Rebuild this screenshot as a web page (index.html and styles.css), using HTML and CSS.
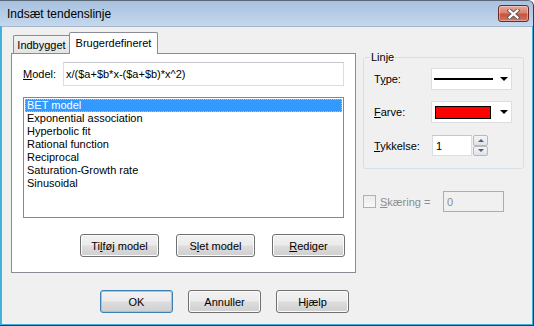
FILE: index.html
```html
<!DOCTYPE html>
<html lang="da">
<head>
    <meta charset="UTF-8">
    <title>Indsæt tendenslinje</title>
    <link rel="stylesheet" href="styles.css">
</head>
<body>
<div class="window">
    <div class="titlebar">
        <span class="title">Indsæt tendenslinje</span>
        <button class="close" title="Luk">
            <svg width="13" height="10" viewBox="0 0 13 10">
                <path d="M2.5 1.5 L10.5 8.5 M10.5 1.5 L2.5 8.5" stroke="#5a5a5a" stroke-width="4" stroke-linecap="square"/>
                <path d="M2.5 1.5 L10.5 8.5 M10.5 1.5 L2.5 8.5" stroke="#fff" stroke-width="2.2" stroke-linecap="square"/>
            </svg>
        </button>
    </div>

    <div class="client">
        <div class="main">
            <div class="tabs">
                <div class="tabstrip">
                    <div class="tab">Indbygget</div>
                    <div class="tab active">Brugerdefineret</div>
                </div>
                <div class="panel">
                    <div class="model-row">
                        <label for="model"><u>M</u>odel:</label>
                        <input type="text" id="model" value="x/($a+$b*x-($a+$b)*x^2)">
                    </div>
                    <ul class="list">
                        <li class="selected">BET model</li>
                        <li>Exponential association</li>
                        <li>Hyperbolic fit</li>
                        <li>Rational function</li>
                        <li>Reciprocal</li>
                        <li>Saturation-Growth rate</li>
                        <li>Sinusoidal</li>
                    </ul>
                    <div class="panel-buttons">
                        <button class="btn wide">Ti<u>l</u>føj model</button>
                        <button class="btn wide">S<u>l</u>et model</button>
                        <button class="btn"><u>R</u>ediger</button>
                    </div>
                </div>
            </div>

            <div class="side">
                <fieldset class="group">
                    <legend>Linje</legend>
                    <div class="frow first">
                        <label>T<u>y</u>pe:</label>
                        <div class="combo">
                            <span class="line-sample"></span>
                            <span class="arrow"></span>
                        </div>
                    </div>
                    <div class="frow">
                        <label><u>F</u>arve:</label>
                        <div class="combo">
                            <span class="swatch"></span>
                            <span class="arrow"></span>
                        </div>
                    </div>
                    <div class="frow spin-row">
                        <label><u>T</u>ykkelse:</label>
                        <input type="text" class="num" value="1">
                        <div class="spinner">
                            <span class="spin up"><i></i></span>
                            <span class="spin down"><i></i></span>
                        </div>
                    </div>
                </fieldset>

                <div class="intercept">
                    <span class="check"></span>
                    <label class="disabled"><u>S</u>kæring =</label>
                    <input type="text" class="off" value="0" disabled>
                </div>
            </div>
        </div>

        <div class="footer">
            <button class="btn default">OK</button>
            <button class="btn">Annuller</button>
            <button class="btn">Hjælp</button>
        </div>
    </div>
</div>
</body>
</html>
```

FILE: styles.css
```css
html, body { margin: 0; }
body { font-family: "Liberation Sans", Arial, sans-serif; font-size: 11px; color: #000; background: #fff; }

/* window frame */
.window { width: 534px; height: 326px; box-sizing: border-box; display: flex; flex-direction: column; background: #3fb0dd; border: 1px solid #2f3b46; border-left: none; border-top-color: #5a6877; border-top-right-radius: 6px; overflow: hidden; }
.titlebar { height: 25px; flex: none; display: flex; align-items: center; justify-content: space-between; padding: 0 4px 0 7px; background: linear-gradient(#a8c1de, #c4d8ee); }
.title { font-size: 12px; color: #000; }
.close { width: 31px; height: 17px; padding: 0; display: flex; align-items: center; justify-content: center; border: 1px solid #6b2a24; border-radius: 3px; background: linear-gradient(#e7a797 0%, #d98470 45%, #c8533c 55%, #d27562 100%); box-shadow: inset 0 0 0 1px rgba(255,255,255,0.35); }

.client { flex: 1; margin: 0 1px 1px 1px; background: #f0f0f0; border-left: 1px solid #8d9cab; border-top: 1px solid #a7b7c9; display: flex; flex-direction: column; }
.main { display: flex; padding-top: 5px; }

/* tab control */
.tabs { margin-left: 9px; width: 345px; }
.tabstrip { display: flex; align-items: flex-end; height: 21px; padding-left: 2px; }
.tab { box-sizing: border-box; width: 56px; height: 18px; padding-top: 1px; border: 1px solid #898c95; border-right: none; border-bottom: none; border-radius: 2px 0 0 0; background: linear-gradient(#f3f3f3, #e3e3e3); display: flex; align-items: center; justify-content: center; }
.tab.active { width: 89px; height: 22px; padding: 0 0 1px; margin-bottom: -1px; border-right: 1px solid #898c95; border-radius: 2px 2px 0 0; background: #fff; position: relative; z-index: 1; }
.panel { box-sizing: border-box; height: 220px; border: 1px solid #898c95; background: #fff; padding: 8px 11px 0 11px; }

.model-row { display: flex; align-items: center; }
.model-row label { width: 40px; }
input { font: inherit; color: #000; }
.model-row input { box-sizing: border-box; width: 281px; height: 24px; padding: 0 2px; border: 1px solid #dadde2; border-top-color: #c3c7cd; outline: none; }

.list { list-style: none; margin: 11px 0 0; box-sizing: border-box; height: 121px; border: 1px solid #828790; padding: 1px; }
.list li { height: 13px; line-height: 13px; padding-left: 2px; }
.list li.selected { background: #3399ff; color: #fff; outline: 1px dotted #e9b86a; outline-offset: -1px; }

.panel-buttons { display: flex; justify-content: flex-end; gap: 17px; margin: 16px -1px 0 0; }

/* push buttons */
.btn { box-sizing: border-box; width: 73px; height: 23px; padding: 0; font: inherit; color: #000; border: 1px solid #707070; border-radius: 3px; background: linear-gradient(#f2f2f2 0%, #ebebeb 48%, #dddddd 52%, #cfcfcf 100%); box-shadow: inset 0 0 0 1px #fbfbfb; }
.btn.wide { width: 79px; }
.btn.default { border-color: #3c7fb1; box-shadow: inset 0 0 0 1px #7fd3f5; }

/* right column */
.side { margin-left: 7px; padding-top: 19px; width: 161px; }
.group { margin: 0; padding: 0 0 12px 10px; border: 1px solid #d5dfe5; border-radius: 3px; min-width: 0; }
.group legend { padding: 0 1px; margin-left: -4px; line-height: 13px; }
.frow { display: flex; align-items: center; height: 22px; margin-top: 11px; }
.frow.first { margin-top: 4px; }
.frow.spin-row { height: 21px; margin-top: 12px; }
.frow label { width: 57px; }

.combo { box-sizing: border-box; width: 81px; height: 22px; display: flex; align-items: center; padding: 0 3px 0 2px; background: #fff; border: 1px solid #dadde2; }
.line-sample { width: 59px; height: 2px; background: #000; }
.swatch { box-sizing: border-box; width: 56px; height: 13px; margin-left: 1px; background: #ff0000; border: 1px solid #000; }
.arrow { margin-left: auto; width: 0; height: 0; border-left: 4px solid transparent; border-right: 4px solid transparent; border-top: 4px solid #000; }

.num { box-sizing: border-box; width: 40px; height: 21px; margin-left: 1px; padding: 0 3px; border: 1px solid #dadde2; border-top-color: #c3c7cd; }
.spinner { margin-left: 1px; width: 15px; height: 21px; display: flex; flex-direction: column; }
.spin { box-sizing: border-box; flex: 1; display: flex; align-items: center; justify-content: center; border: 1px solid #b5b9c0; border-radius: 2px; background: linear-gradient(#f5f5f5, #dfe2e6); }
.spin i { width: 0; height: 0; border-left: 3px solid transparent; border-right: 3px solid transparent; }
.spin.up i { border-bottom: 3px solid #4d6185; }
.spin.down i { border-top: 3px solid #4d6185; }

.intercept { display: flex; align-items: center; height: 21px; margin-top: 22px; }
.check { box-sizing: border-box; width: 13px; height: 13px; border: 1px solid #b1b1b1; background: linear-gradient(#ececec, #f8f8f8); }
.intercept .disabled { width: 63px; margin-left: 4px; color: #8d8d8d; }
.off { box-sizing: border-box; width: 61px; height: 21px; padding: 0 3px; border: 1px solid #adadad; background: #f0f0f0; color: #8d8d8d; }

.footer { display: flex; gap: 15px; padding-left: 98px; margin-top: 17px; }
```
